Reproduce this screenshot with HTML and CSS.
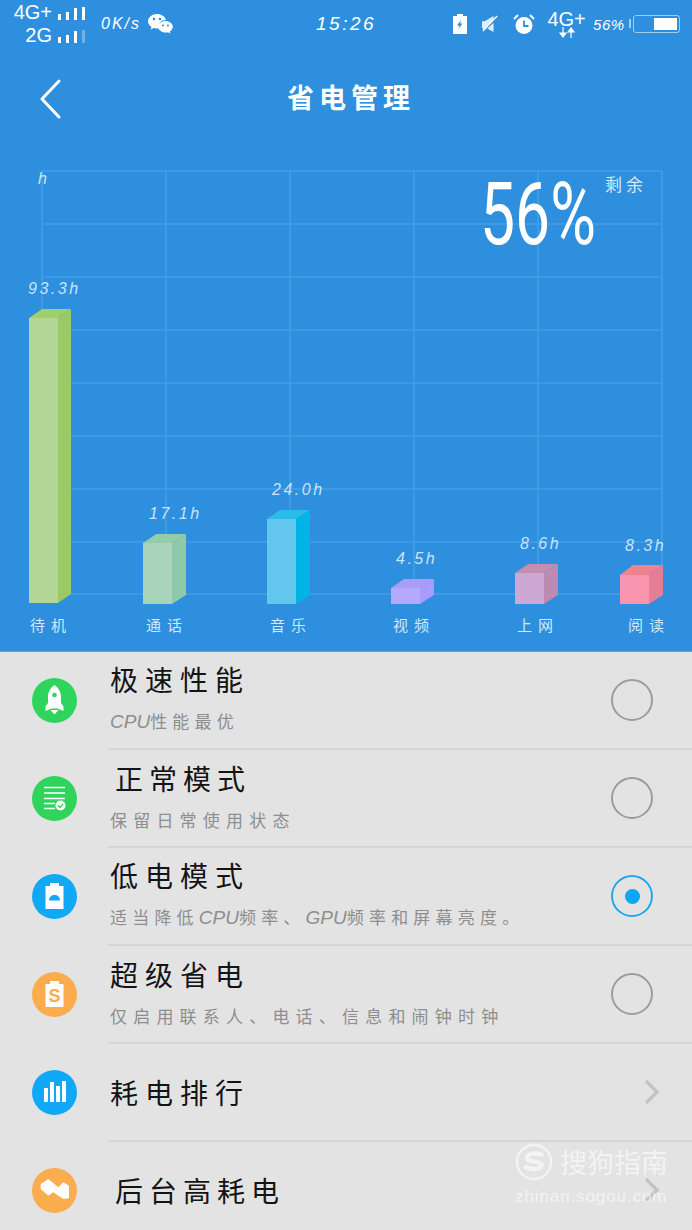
FILE: index.html
```html
<!DOCTYPE html>
<html lang="zh-CN">
<head>
    <meta charset="UTF-8">
    <title>省电管理</title>
    <link rel="stylesheet" href="styles.css">
</head>
<body>
<div class="page">
    <div class="top">
        <!-- status bar -->
        <div class="status">
            <div class="sims">
                <div class="sim"><span>4G+</span>
                    <svg width="30" height="14" viewBox="0 0 30 14"><path d="M2 8h3v6H2zM10 6h3v8h-3zM18 2h3v12h-3zM26 1h3v13h-3z" fill="#fff"/></svg>
                </div>
                <div class="sim"><span>2G</span>
                    <svg width="30" height="14" viewBox="0 0 30 14"><path d="M2 8h3v6H2zM10 6h3v8h-3zM18 2h3v12h-3z" fill="#fff"/><path d="M26 1h3v13h-3z" fill="#6db2ea"/></svg>
                </div>
            </div>
            <span class="speed">0K/s</span>
            <svg class="wechat" width="25" height="22" viewBox="0 0 25 22">
                <path d="M9 1C4 1 0 4.300 0 8.300c0 2.400 1.400 4.400 3.500 5.700l-.8 2.700 3-1.600c1 .3 2.100.5 3.300.5 1 0 1.500-.1 2-.3C10 10 14 6.500 18 7 17 3.500 13.400 1 9 1z" fill="#fff"/>
                <path d="M17.500 8c-4 0-7.300 2.600-7.300 5.800s3.300 5.800 7.300 5.800c.9 0 1.700-.1 2.500-.4l2.400 1.500-.6-2.300c1.800-1.100 3-2.700 3-4.600C24.800 10.600 21.500 8 17.500 8z" fill="#fff"/>
                <circle cx="6" cy="6" r="1.300" fill="#2d8fdd"/><circle cx="12" cy="6" r="1.300" fill="#2d8fdd"/>
                <circle cx="15" cy="12.500" r="1" fill="#2d8fdd"/><circle cx="20" cy="12.500" r="1" fill="#2d8fdd"/>
            </svg>
            <span class="clock">15:26</span>
            <svg class="ic-charge" width="16" height="20" viewBox="0 0 16 20">
                <path d="M5 0h6v2h4v18H1V2h4z" fill="#fff"/><path d="M9 6l-4 5.500h2.500L6.500 15l4-5.500H8z" fill="#2d8fdd"/>
            </svg>
            <svg class="ic-mute" width="16" height="20" viewBox="0 0 18 20">
                <path d="M0 7h3L13 1v4L2 17 0 14zM13 9v10l-7-4z" fill="#fff" fill-opacity=".85"/><path d="M1 18L17 1" stroke="#fff" stroke-width="1.500"/>
            </svg>
            <svg class="ic-alarm" width="22" height="22" viewBox="0 0 22 22">
                <circle cx="11" cy="12.500" r="8.500" fill="#fff"/><path d="M11 7.500v5.500h4.500" fill="none" stroke="#2d8fdd" stroke-width="1.800"/>
                <path d="M1 6l4-4M21 6l-4-4" stroke="#fff" stroke-width="1.800"/>
            </svg>
            <div class="net">
                <span class="net-name">4G+</span>
                <svg width="18" height="11" viewBox="0 0 18 11"><path d="M5 0v7M2 6l3 4 3-4zM13 11V4M10 5l3-4 3 4z" fill="#fff" stroke="#fff" stroke-width="1.200"/></svg>
            </div>
            <span class="pct">56%</span>
            <div class="battery"><div class="battery-level"></div></div>
        </div>

        <!-- title -->
        <div class="nav">
            <svg class="back" width="24" height="42" viewBox="0 0 24 42">
                <path d="M20 3L3 21l17 18" fill="none" stroke="#fff" stroke-width="3" stroke-linecap="round" stroke-linejoin="round"/>
            </svg>
            <h1 class="title">省电管理</h1>
        </div>

        <!-- chart, coordinates are page pixels -->
        <svg class="chart" width="692" height="491" viewBox="0 160 692 491">
            <g class="grid">
                <path d="M42 171H662M42 224H662M42 277H662M42 330H662M42 383H662M42 436H662M42 489H662M42 542H662M42 594H662"/>
                <path d="M42 171V594M166 171V594M290 171V594M414 171V594M538 171V594M662 171V594"/>
            </g>
            <text class="val" x="38" y="184">h</text>
            <text class="big" transform="translate(480 244) scale(.71 1)">56%</text>
            <text class="left-txt" x="605" y="191">剩余</text>

            <polygon fill="#9fce6c" points="29,318 42,309 71,309 58,318"/>
            <polygon fill="#9bca65" points="58,318 71,309 71,594 58,603"/>
            <rect fill="#b3d595" x="29" y="318" width="29" height="285"/>
            <text class="val" x="28" y="294">93.3h</text>
            <text class="name" x="30" y="631">待机</text>

            <polygon fill="#93cbab" points="143,543 156,534 186,534 172,543"/>
            <polygon fill="#8fc9a9" points="172,543 186,534 186,595 172,604"/>
            <rect fill="#a9d4bc" x="143" y="543" width="29" height="61"/>
            <text class="val" x="149" y="519">17.1h</text>
            <text class="name" x="146" y="631">通话</text>

            <polygon fill="#2bbde8" points="267,519 280,510 310,510 296,519"/>
            <polygon fill="#00b4e6" points="296,519 310,510 310,595 296,604"/>
            <rect fill="#62c6ee" x="267" y="519" width="29" height="85"/>
            <text class="val" x="272" y="495">24.0h</text>
            <text class="name" x="270" y="631">音乐</text>

            <polygon fill="#ab9cf8" points="391,588 404,579 434,579 420,588"/>
            <polygon fill="#a79bfb" points="420,588 434,579 434,595 420,604"/>
            <rect fill="#b7a8ff" x="391" y="588" width="29" height="16"/>
            <text class="val" x="396" y="564">4.5h</text>
            <text class="name" x="393" y="631">视频</text>

            <polygon fill="#c48eb0" points="515,573 528,564 558,564 544,573"/>
            <polygon fill="#bd8ab2" points="544,573 558,564 558,595 544,604"/>
            <rect fill="#cda8d4" x="515" y="573" width="29" height="31"/>
            <text class="val" x="520" y="549">8.6h</text>
            <text class="name" x="517" y="631">上网</text>

            <polygon fill="#f0818f" points="620,575 633,565 663,565 649,575"/>
            <polygon fill="#e47d96" points="649,575 663,565 663,595 649,604"/>
            <rect fill="#f894ae" x="620" y="575" width="29" height="29"/>
            <text class="val" x="625" y="551">8.3h</text>
            <text class="name" x="628" y="631">阅读</text>
        </svg>
    </div>

    <!-- mode list -->
    <ul class="list">
        <li class="row">
            <svg class="icon" width="45" height="45" viewBox="0 0 45 45">
                <circle cx="22.500" cy="22.500" r="22.500" fill="#2fd45c"/>
                <path d="M22.500 7c4.500 3 6.500 7.500 6.500 12v6l2.500 3.500V33l-6-2.500h-6l-6 2.500v-4.500L16 25v-6c0-4.500 2-9 6.500-12zM18.500 32h8l-4 4.500z" fill="#fff"/>
                <circle cx="22.500" cy="17" r="2.300" fill="#2fd45c"/>
            </svg>
            <div class="row-text">
                <div class="row-title">极速性能</div>
                <div class="row-sub tight"><i>CPU</i>性能最优</div>
            </div>
            <span class="radio"></span>
        </li>
        <li class="row">
            <svg class="icon" width="45" height="45" viewBox="0 0 45 45">
                <circle cx="22.500" cy="22.500" r="22.500" fill="#2fd45c"/>
                <path d="M12 11.500h21M12 17h21M12 22.500h21M12 27.500h11M12 32.500h11" stroke="#fff" stroke-width="1.600"/>
                <circle cx="28.500" cy="29.500" r="5" fill="#fff"/>
                <path d="M26 29.500l2 2 3-3.500" fill="none" stroke="#2fd45c" stroke-width="1.400"/>
            </svg>
            <div class="row-text">
                <div class="row-title inset">正常模式</div>
                <div class="row-sub">保留日常使用状态</div>
            </div>
            <span class="radio"></span>
        </li>
        <li class="row">
            <svg class="icon" width="45" height="45" viewBox="0 0 45 45">
                <circle cx="22.500" cy="22.500" r="22.500" fill="#11a9f5"/>
                <path d="M18 9h9v3h4.500v23h-18V12H18z" fill="#fff"/>
                <path d="M17 26.500c0-3.500 2.500-5.500 5.500-5.500s5.500 2 5.500 5.500z" fill="#11a9f5"/>
            </svg>
            <div class="row-text">
                <div class="row-title">低电模式</div>
                <div class="row-sub tight">适当降低<i>CPU</i>频率、<i>GPU</i>频率和屏幕亮度。</div>
            </div>
            <span class="radio on"></span>
        </li>
        <li class="row">
            <svg class="icon" width="45" height="45" viewBox="0 0 45 45">
                <circle cx="22.500" cy="22.500" r="22.500" fill="#fbac4c"/>
                <path d="M18 9h9v3h4.500v23h-18V12H18z" fill="#fff"/>
                <text class="s-mark" x="22.500" y="29.500" text-anchor="middle">S</text>
            </svg>
            <div class="row-text">
                <div class="row-title">超级省电</div>
                <div class="row-sub">仅启用联系人、电话、信息和闹钟时钟</div>
            </div>
            <span class="radio"></span>
        </li>
        <li class="row">
            <svg class="icon" width="45" height="45" viewBox="0 0 45 45">
                <circle cx="22.500" cy="22.500" r="22.500" fill="#11a9f5"/>
                <path d="M12 18h4v14h-4zM18 12h4v20h-4zM24 16h4v16h-4zM30 11h4v21h-4z" fill="#fff"/>
            </svg>
            <div class="row-text"><div class="row-title">耗电排行</div></div>
            <svg class="more" width="18" height="28" viewBox="0 0 18 28"><path d="M3 3l11 11L3 25" fill="none" stroke="#c4c4c4" stroke-width="3.500"/></svg>
        </li>
        <li class="row">
            <svg class="icon" width="45" height="45" viewBox="0 0 45 45">
                <circle cx="22.500" cy="22.500" r="22.500" fill="#fbac4c"/>
                <path d="M8.700 16l7.600-5 10 8.300 5-5 5.700 3.400v12.600l-5.700.7-10-6.700-5 3.400-7.600-6.700z" fill="#fff"/>
            </svg>
            <div class="row-text"><div class="row-title inset">后台高耗电</div></div>
            <svg class="more" width="18" height="28" viewBox="0 0 18 28"><path d="M3 3l11 11L3 25" fill="none" stroke="#c4c4c4" stroke-width="3.500"/></svg>
        </li>
    </ul>

    <!-- watermark -->
    <div class="mark">
        <div class="mark-top">
            <svg width="38" height="38" viewBox="0 0 38 38">
                <circle cx="19" cy="19" r="17" fill="none" stroke="#fff" stroke-width="2.500"/>
                <path d="M28 13c-3-3-15-4-16 1.500C11 20 27 17 26.500 22.500 26 27 14 27 9.500 23" fill="none" stroke="#fff" stroke-width="4.500"/>
            </svg>
            <span class="mark-name">搜狗指南</span>
        </div>
        <div class="mark-url">zhinan.sogou.com</div>
    </div>
</div>
</body>
</html>
```

FILE: styles.css
```css
*{margin:0;padding:0;list-style:none;box-sizing:border-box;}
body{
    width:692px;
    height:1230px;
    overflow:hidden;
    background:#e3e3e3;
    font-family:"Noto Sans CJK SC","Liberation Sans",sans-serif;
}
.page{
    position:relative;
    width:692px;
    height:1230px;
    overflow:hidden;
}
.top{
    height:652px;
    background:#2d8fdd;
    color:#fff;
    border-bottom:1px solid #5aa8e6;
}

/* status bar */
.status{
    display:flex;
    align-items:center;
    height:48px;
    padding-left:12px;
}
.sims{width:76px;}
.sim{
    display:flex;
    justify-content:flex-end;
    align-items:center;
    height:23px;
    gap:4px;
    font:20px/23px "Liberation Sans",sans-serif;
    letter-spacing:0;
}
.sim svg{margin-right:2px;}
.speed{
    margin-left:13px;
    font:italic 16px "Liberation Sans",sans-serif;
    letter-spacing:2px;
}
.wechat{margin-left:7px;}
.clock{
    margin-left:143px;
    font:italic 19px "Liberation Sans",sans-serif;
    letter-spacing:2.500px;
}
.ic-charge{margin-left:76px;}
.ic-mute{margin-left:14px;}
.ic-alarm{margin-left:15px;}
.net{
    display:flex;
    flex-direction:column;
    align-items:center;
    margin-left:11px;
    width:41px;
}
.net-name{
    font:20px/18px "Liberation Sans",sans-serif;
}
.net svg{margin-top:-1px;}
.pct{
    width:32px;
    margin-left:6px;
    font:italic 15px "Liberation Sans",sans-serif;
    letter-spacing:.5px;
    white-space:nowrap;
}
.battery{
    position:relative;
    display:flex;
    justify-content:flex-end;
    align-items:center;
    width:47px;
    height:18px;
    margin-left:8px;
    padding:2px 2px;
    border:1.500px solid #9fcdf0;
    border-radius:3px;
}
.battery::before{
    content:"";
    position:absolute;
    left:-5px;
    top:3px;
    width:2px;
    height:9px;
    background:#9fcdf0;
}
.battery-level{
    width:23px;
    height:100%;
    background:#fff;
}

/* title */
.nav{
    display:flex;
    align-items:center;
    justify-content:center;
    position:relative;
    height:112px;
    padding-bottom:16px;
}
.back{
    position:absolute;
    left:39px;
    top:30px;
}
.title{
    margin-left:10px;
    font-size:27px;
    font-weight:700;
    letter-spacing:5px;
}

/* chart */
.chart{display:block;}
.grid path{
    fill:none;
    stroke:#469fe6;
    stroke-width:1.500;
}
.val{
    font:italic 16px "Liberation Sans",sans-serif;
    letter-spacing:2.500px;
    fill:#c9e3f8;
}
.big{
    font:400 88px Roboto,"Liberation Sans",sans-serif;
    fill:#fff;
}
.left-txt{
    font-size:17px;
    letter-spacing:4px;
    fill:#d3e8f9;
}
.name{
    font-size:15px;
    letter-spacing:6px;
    fill:#d3e8f9;
}

/* rows */
.row{
    display:flex;
    align-items:center;
    height:98px;
    padding-left:32px;
    padding-bottom:2px;
    position:relative;
}
.row::after{
    content:"";
    position:absolute;
    left:108px;
    right:0;
    bottom:0;
    height:2px;
    background:#d5d5d5;
}
.icon{flex:none;}
.row-text{
    flex:1;
    margin-left:33px;
    display:flex;
    flex-direction:column;
    gap:6px;
}
.row-title{
    font-size:28px;
    line-height:38px;
    letter-spacing:7px;
    color:#141414;
}
.row-title.inset{margin-left:5px;letter-spacing:6px;}
.row-sub{
    margin-bottom:1px;
    font-size:17px;
    line-height:34px;
    letter-spacing:6.200px;
    color:#8e8e8e;
    white-space:nowrap;
}
.row-sub.tight{letter-spacing:5.200px;}
.row-sub i{letter-spacing:0;font-size:19px;font-family:"Liberation Sans",sans-serif;}
.radio{
    flex:none;
    display:flex;
    align-items:center;
    justify-content:center;
    width:42px;
    height:42px;
    margin-right:39px;
    border:2px solid #9c9c9c;
    border-radius:50%;
}
.radio.on{border-color:#1fa9e8;}
.radio.on::before{
    content:"";
    width:15px;
    height:15px;
    border-radius:50%;
    background:#0aa6fa;
}
.more{
    flex:none;
    margin-right:31px;
}
.s-mark{
    font:700 18px "Liberation Sans",sans-serif;
    fill:#fbac4c;
}

/* watermark sits over the last row */
.mark{
    position:absolute;
    left:515px;
    top:1143px;
    width:155px;
    opacity:.58;
    color:#fff;
}
.mark-top{
    display:flex;
    align-items:center;
    gap:7px;
}
.mark-name{
    font-size:27px;
    line-height:38px;
    white-space:nowrap;
}
.mark-url{
    margin-top:6px;
    font:17px/20px "Liberation Sans",sans-serif;
    letter-spacing:.900px;
    white-space:nowrap;
}
```
